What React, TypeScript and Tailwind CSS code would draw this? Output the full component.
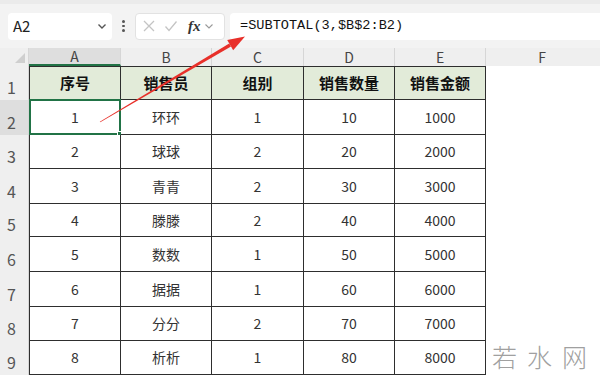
import React from 'react';

const cols = ['A', 'B', 'C', 'D', 'E'];
const header = ['序号', '销售员', '组别', '销售数量', '销售金额'];
const rows = [
  ['1', '环环', '1', '10', '1000'],
  ['2', '球球', '2', '20', '2000'],
  ['3', '青青', '2', '30', '3000'],
  ['4', '滕滕', '2', '40', '4000'],
  ['5', '数数', '1', '50', '5000'],
  ['6', '据据', '1', '60', '6000'],
  ['7', '分分', '2', '70', '7000'],
  ['8', '析析', '1', '80', '8000'],
];
// row heights measured from the sheet
const heights = [34, 35, 34, 35, 33, 35, 35, 34, 34];
const widths = ['w-[92px]', 'w-[91px]', 'w-[92px]', 'w-[91px]', 'w-[91px]'];

export default function App() {
  return (
    <div className="relative w-[600px] h-[379px] overflow-hidden bg-white" style={{ fontFamily: '"Noto Sans CJK SC", "Noto Sans", sans-serif' }}>
      {/* Formula bar */}
      <div className="h-[48px] bg-[#f3f3f3] border-t-[4px] border-[#ebebeb] flex items-center pl-[8px]">
        <div className="w-[104px] h-[27px] bg-white rounded-[4px] flex items-center justify-between pl-[5px] pr-[4px] text-[15px] text-[#222]">
          <span>A2</span>
          <svg width="12" height="12" viewBox="0 0 12 12"><path d="M2.5 4.5 L6 8 L9.5 4.5" fill="none" stroke="#555" strokeWidth="1.4" /></svg>
        </div>
        <div className="w-[23px] flex flex-col items-center gap-[2px]">
          <span className="w-[2.5px] h-[2.5px] rounded-full bg-[#555]" />
          <span className="w-[2.5px] h-[2.5px] rounded-full bg-[#555]" />
          <span className="w-[2.5px] h-[2.5px] rounded-full bg-[#555]" />
        </div>
        <div className="w-[90px] h-[27px] bg-white rounded-[4px] border border-[#e2e2e2] flex items-center pl-[6px] gap-[8px]">
          <svg width="14" height="14" viewBox="0 0 14 14"><path d="M2 2 L12 12 M12 2 L2 12" stroke="#c4c4c4" strokeWidth="1.3" /></svg>
          <svg width="14" height="14" viewBox="0 0 14 14"><path d="M1.5 7.5 L5 11.5 L12.5 2.5" fill="none" stroke="#c4c4c4" strokeWidth="1.3" /></svg>
          <span className="ml-[2px] italic font-bold text-[15px] text-[#333] leading-none" style={{ fontFamily: '"Liberation Serif", serif' }}>fx</span>
          <svg width="10" height="10" viewBox="0 0 10 10" className="-ml-[5px]"><path d="M1.5 3.5 L5 7 L8.5 3.5" fill="none" stroke="#999" strokeWidth="1.1" /></svg>
        </div>
        <div className="ml-[5px] flex-1 h-[27px] bg-white rounded-l-[4px] flex items-center pl-[10px] text-[13.6px] text-[#111]" style={{ fontFamily: '"Liberation Mono", monospace' }}>
          =SUBTOTAL(3,$B$2:B2)
        </div>
      </div>

      {/* Column headers */}
      <div className="flex h-[18px] bg-[#efefef] text-[14px] text-[#444] leading-none">
        <div className="w-[29px] relative border-r border-[#d6d6d6]">
          <svg width="10" height="10" viewBox="0 0 10 10" className="absolute right-[3px] bottom-[3px]"><path d="M10 0 L10 10 L0 10 Z" fill="#cfcfcf" /></svg>
        </div>
        {cols.map((c, i) => (
          <div key={c} className={`${widths[i]} flex items-center justify-center border-r border-[#d6d6d6] ${i === 0 ? 'bg-[#dedede] border-b-2 border-b-[#217346]' : ''}`}>{c}</div>
        ))}
        <div className="flex-1 flex items-center justify-center pr-[2px]">F</div>
      </div>

      {/* Grid */}
      <div className="flex flex-col">
        {heights.map((h, r) => {
          const isHead = r === 0;
          const cells = isHead ? header : rows[r - 1];
          return (
            <div key={r} className="flex" style={{ height: h }}>
              <div className={`w-[29px] flex items-end pl-[7px] pb-[1px] text-[16px] text-[#555] border-r border-[#d6d6d6] ${r === 1 ? 'bg-[#dedede]' : 'bg-[#efefef]'}`}>{r + 1}</div>
              {cells.map((v, i) => (
                <div
                  key={i}
                  className={`${widths[i]} relative flex items-center justify-center border-r border-b border-[#2e2e2e] text-[14px] ${isHead ? 'bg-[#e2ebd9] font-bold text-[#111] text-[15px] border-t' : 'bg-white text-[#333]'} ${i === 0 ? 'border-l' : ''}`}
                >
                  {r === 1 && i === 0 && (
                    <div className="absolute -left-[1px] -top-[1px] -right-[1px] -bottom-[1px] border-2 border-[#217346]">
                      <span className="absolute -right-[4px] -bottom-[4px] w-[6px] h-[6px] bg-[#217346] border border-white" />
                    </div>
                  )}
                  {v}
                </div>
              ))}
              <div className="flex-1 bg-white" />
            </div>
          );
        })}
      </div>

      {/* Red annotation arrow */}
      <svg className="absolute left-0 top-0 pointer-events-none" width="600" height="379" viewBox="0 0 600 379">
        <polygon points="99.8,121.7 100.2,122.3 231,46.6 229.2,43.6" fill="#e8302a" />
        <polygon points="245,36.5 233.2,50.3 227.2,39.9" fill="#e8302a" />
      </svg>

      {/* Watermark */}
      <div className="absolute left-[492px] top-[344px] flex gap-[10px] text-[25px] text-[#a0a0a0] font-light leading-none">
        <span>若</span><span>水</span><span>网</span>
      </div>
    </div>
  );
}
